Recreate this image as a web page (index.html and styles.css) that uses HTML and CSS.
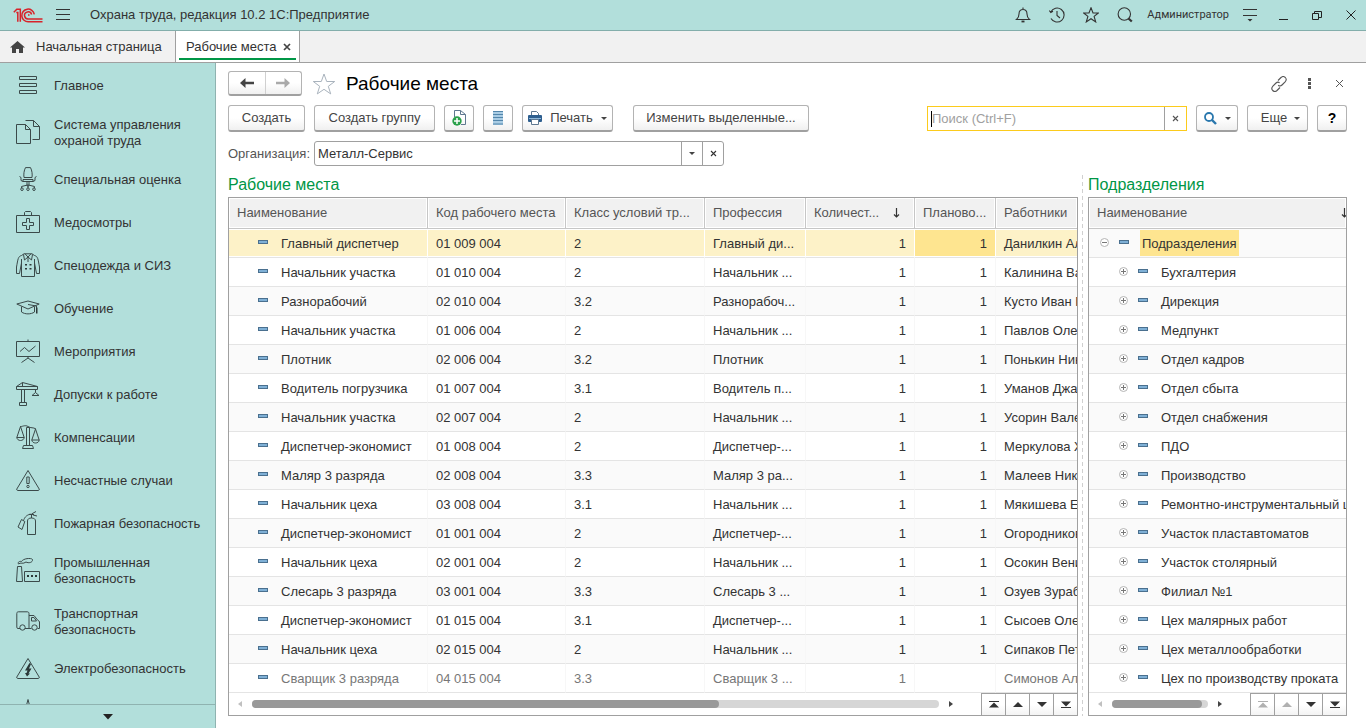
FILE: index.html
```html
<!DOCTYPE html>
<html lang="ru">
<head>
<meta charset="utf-8">
<title>Охрана труда, редакция 10.2</title>
<link rel="stylesheet" href="styles.css">
</head>
<body>
<svg class="defs" width="0" height="0" aria-hidden="true">
  <symbol id="x-small" viewBox="0 0 7 7"><path d="M1 1l5 5M6 1L1 6" stroke="currentColor" stroke-width="1.100" fill="none"/></symbol>
  <symbol id="go-top" viewBox="0 0 10 7"><path d="M0 0h10v1H0zM5 1.500l5 5H0z" fill="currentColor"/></symbol>
  <symbol id="go-up" viewBox="0 0 10 7"><path d="M5 1l5 5H0z" fill="currentColor"/></symbol>
  <symbol id="go-down" viewBox="0 0 10 7"><path d="M5 6l5-5H0z" fill="currentColor"/></symbol>
  <symbol id="go-bottom" viewBox="0 0 10 7"><path d="M0 6h10v1H0zM5 5.500l5-5H0z" fill="currentColor"/></symbol>
  <symbol id="plus" viewBox="0 0 9 9"><circle cx="4.500" cy="4.500" r="4" fill="#fff" stroke="#b4b4b4"/><path d="M2 4.500h5M4.500 2v5" stroke="#777"/></symbol>
  <symbol id="minus" viewBox="0 0 9 9"><circle cx="4.500" cy="4.500" r="4" fill="#fff" stroke="#b4b4b4"/><path d="M2 4.500h5" stroke="#777"/></symbol>
  <symbol id="sort" viewBox="0 0 7 10"><path d="M3.500 0v9M1 6.500l2.500 2.500L6 6.500" fill="none" stroke="#333" stroke-width="1.200"/></symbol>
</svg>

<header class="titlebar">
  <svg class="logo" width="30" height="15" viewBox="0 0 30 15" fill="none" stroke="#d8232a" stroke-width="1.500"><path d="M.8 4.200L3.800 1.200H7.300V13.800M3.300 4.500H4.800V13.800"/><path d="M21.300 6.300A6.300 6.300 0 1 0 15.500 13.700H29.500"/><path d="M18.600 6.500A3.600 3.600 0 1 0 15.500 11H29.500"/><path d="M16.500 7h-1.500"/></svg>
  <button class="icon-btn menu-btn" aria-label="Меню"><svg width="14" height="12" viewBox="0 0 14 12" stroke="#333"><path d="M0 .5h14M0 5.500h14M0 10.500h14"/></svg></button>
  <h1 class="app-title">Охрана труда, редакция 10.2 1С:Предприятие</h1>
  <div class="title-tools">
    <button class="icon-btn" aria-label="Уведомления"><svg width="16" height="16" viewBox="0 0 16 16" fill="none" stroke="#333" stroke-width="1.100"><path d="M1.500 12.500h13c-1.800-1.500-2.500-3-2.500-5.500C12 4 10.500 2.500 8 2.500S4 4 4 7c0 2.500-.7 4-2.500 5.500zM8 .5v2"/><path d="M6.500 14.500h3" stroke-width="1.800"/></svg></button>
    <button class="icon-btn" aria-label="История"><svg width="16" height="16" viewBox="0 0 16 16" fill="none" stroke="#333" stroke-width="1.100"><path d="M1.800 5A7 7 0 1 1 2 11.500M.3 3.500L1.800 5.500 4 4.300M8 4v4.500l3 2.500"/></svg></button>
    <button class="icon-btn" aria-label="Избранное"><svg width="16" height="16" viewBox="0 0 16 16" fill="none" stroke="#333" stroke-width="1.100"><path d="M8 .8l2 5.200h5.300l-4.200 3.400 1.600 5.500L8 11.700l-4.700 3.200 1.600-5.500L.7 6H6z"/></svg></button>
    <button class="icon-btn" aria-label="Поиск"><svg width="16" height="16" viewBox="0 0 16 16" fill="none" stroke="#333"><circle cx="7.300" cy="7" r="6.200" stroke-width="1.100"/><path d="M11.500 11.500l3.300 3" stroke-width="2.200"/></svg></button>
    <a class="user" href="#">Администратор</a>
    <button class="icon-btn" aria-label="Настройки"><svg width="14" height="13" viewBox="0 0 14 13"><path d="M0 .5h14M0 6.500h14" stroke="#333"/><path d="M4.500 10h5L7 12.500z" fill="#333"/></svg></button>
    <button class="icon-btn win" aria-label="Свернуть"><svg width="9" height="10" viewBox="0 0 9 10"><path d="M0 9.500h9" stroke="#222"/></svg></button>
    <button class="icon-btn win" aria-label="Восстановить"><svg width="10" height="9" viewBox="0 0 10 9" fill="none" stroke="#222"><path d="M.5 2.500h6v6h-6zM2.500 2.500v-2h7v6h-3"/></svg></button>
    <button class="icon-btn win" aria-label="Закрыть"><svg width="10" height="10" viewBox="0 0 10 10"><path d="M.5.5l9 9M9.500.5l-9 9" stroke="#222"/></svg></button>
  </div>
</header>

<nav class="tabs">
  <a class="tab home" href="#"><svg width="15" height="12" viewBox="0 0 15 12"><path d="M7.500 0L15 6.500h-2V12H9V8H6v4H2V6.500H0z" fill="#444"/></svg>Начальная страница</a>
  <div class="tab active"><a href="#">Рабочие места</a><button class="tab-close" aria-label="Закрыть вкладку"><svg width="8" height="8" viewBox="0 0 8 8"><path d="M1 1l6 6M7 1L1 7" stroke="#444" stroke-width="1.700"/></svg></button></div>
</nav>

<div class="workspace">
<aside class="sidebar">
  <nav class="sections">
    <a href="#"><svg viewBox="0 0 24 24"><path d="M3.500 3.500h17v3h-17zM3.500 10.500h17v3h-17zM3.500 17.500h17v3h-17z"/></svg><span>Главное</span></a>
    <a href="#" class="tall"><svg viewBox="0 0 24 24"><path d="M.5 4.500h9l5 5v14H.5zM9.500 4.500v5h5M9.500.5h8l6 6v13h-7M17.500.5v6h6"/></svg><span>Система управления охраной труда</span></a>
    <a href="#"><svg viewBox="0 0 24 24"><path d="M9.500.6h5c1.500 3 2 6.500 1.500 9.900H8C7.500 7 8 3.500 9.500.6zM7 12.500h10v2H7zM3.500 9.500l1.500 1v3L7 14.500M20.500 9.500l-1.500 1v3L17 14.500M11 14.500V19h2v-4.500M5.500 21v-1.500l6-1.500h1l6 1.500V21M12 18v3"/><circle cx="6" cy="22.200" r="1.300"/><circle cx="12" cy="22.200" r="1.300"/><circle cx="18" cy="22.200" r="1.300"/></svg><span>Специальная оценка</span></a>
    <a href="#"><svg viewBox="0 0 24 24"><path d="M.5 5.500h23v17H.5zM8.500 5.500v-3l1-1h5l1 1v3M10.500 8.500h3v4h4v3h-4v4h-3v-4h-4v-3h4z"/></svg><span>Медосмотры</span></a>
    <a href="#"><svg viewBox="0 0 24 24"><path d="M8 .8h8M8 .8L5.500 2.500C2 3.500 2 6 .5 14v6.500h3L5.500 10v13.500h13V10l2 10.500h3V14C22 6 22 3.500 18.500 2.500L16 .8M5.500 10V6M18.500 10V6M7.500 1.500l1 5.500L12 4l3.500 3 1-5.500M9 .8L12 4l3-3.200M12 4v5"/><path class="dots" d="M9 11h2v1.500H9zM13.500 11h2v1.500h-2zM9 15h2v1.500H9zM13.500 15h2v1.500h-2z"/></svg><span>Спецодежда и СИЗ</span></a>
    <a href="#"><svg viewBox="0 0 24 24"><path d="M.8 8L12 5l11.200 3L12 13zM5.500 10.500v5.500c3.500 2.500 9.500 2.500 13 0v-5.500M12 8.500l8.500 1.500v7"/><path class="dots" d="M20 11.500h1.500v6H20z"/></svg><span>Обучение</span></a>
    <a href="#"><svg viewBox="0 0 24 24"><path d="M.5 2.500h23v15H.5zM12 .5v2M12 17.500v2M5.500 23.500L12 19l6.500 4.500M4 12.500l4.500-4 4.500 4 6.500-5.500"/></svg><span>Мероприятия</span></a>
    <a href="#"><svg viewBox="0 0 24 24"><path d="M.5 4.500h21v3H.5zM.5 4.500l6-4 15 4M6.500.5v4M5.500 7.500v13M8.500 7.500v13M3.500 20.500h7v3h-7zM19.500 7.500v3M16 13.500l3.500-3 3.500 3z"/></svg><span>Допуски к работе</span></a>
    <a href="#"><svg viewBox="0 0 24 24"><path d="M10.500 2.500v18h3v-18zM7.500 20.500h9l1 3h-11zM12 1.500C9-.5 6 2 4 1.500M12 1.500c3 2 5 .5 8 2.500M4.500 1.500L.8 12.500h7.400zM.8 12.500c.5 4 7 4 7.400 0M19.500 4l-3.700 11h7.400zM15.800 15c.5 4 7 4 7.400 0"/></svg><span>Компенсации</span></a>
    <a href="#"><svg viewBox="0 0 24 24"><path d="M12 2.500L23.200 21c.2.900 0 1.300-.7 1.500h-21c-.7-.2-.9-.6-.7-1.500zM10.800 9h2.400v6.500h-2.400z"/><circle cx="12" cy="18.500" r="1.200"/></svg><span>Несчастные случаи</span></a>
    <a href="#"><svg viewBox="0 0 24 24"><path d="M11.500 23.500V10c0-2 1.500-3 4-3s4 1 4 3v13.500zM15.500 7V3M13 3.500h5M15.500 3L20 .5M17 4l4 1M14.500 3C9.500 4.500 8.500 7 7.500 9.500M5.500 8.500l3.300 2L6 18.500l-4-2.500z"/></svg><span>Пожарная безопасность</span></a>
    <a href="#" class="tall"><svg viewBox="0 0 24 24"><path d="M.5 23.500l1-15h4l1 15zM8.500 13.500h15v10h-15zM2.500 6c-1-2 1-3 3-2.500C7 .5 15-.5 16.500 1.500c.5 3-4 4-6.500 2.500C7 6.500 4.500 4 2.500 6z"/><path class="dots" d="M11 17h2v2h-2zM15 17h2v2h-2zM19 17h2v2h-2z"/></svg><span>Промышленная безопасность</span></a>
    <a href="#" class="tall"><svg viewBox="0 0 24 24"><path d="M4 19.500H2c-.8 0-1.200-.5-1.200-1.300V4.500c0-1 .5-1.700 1.500-1.700h9c1 0 1.700.7 1.700 1.700v15H9M13 6.500h5l4 5 1.500 1v7h-2M15.500 8.500h2.500l2.500 3.500h-5zM13 19.500h2.500"/><circle cx="6.500" cy="18.500" r="2.700"/><circle cx="18.500" cy="18.500" r="2.700"/></svg><span>Транспортная безопасность</span></a>
    <a href="#"><svg viewBox="0 0 24 24"><path d="M12 2.500L23.200 21c.2.900 0 1.300-.7 1.500h-21c-.7-.2-.9-.6-.7-1.500z"/><path class="dots" d="M13.500 7L9 14.500h2.500L10.500 17H9l2 3.500 3-3h-1.500l3-5H13l2-4.500z"/></svg><span>Электробезопасность</span></a>
    <a href="#" aria-label="Следующий раздел"><svg viewBox="0 0 24 24"><path d="M12 .5L15 12H9z"/></svg></a>
  </nav>
  <button class="more-sections" aria-label="Прокрутить разделы"><svg width="10" height="6" viewBox="0 0 10 6"><path d="M0 0h10L5 5.500z" fill="#222"/></svg></button>
</aside>

<main class="form">
  <div class="form-head">
    <div class="nav-pair">
      <button aria-label="Назад"><svg width="14" height="10" viewBox="0 0 14 10"><path d="M5.500 0L0 5l5.500 5V6.200H14V3.800H5.500z" fill="#444"/></svg></button>
      <button aria-label="Вперед"><svg width="14" height="10" viewBox="0 0 14 10"><path d="M8.500 0L14 5l-5.500 5V6.200H0V3.800h8.500z" fill="#aaa"/></svg></button>
    </div>
    <button class="icon-btn fav" aria-label="В избранное"><svg width="24" height="22" viewBox="0 0 24 22" fill="none" stroke="#a9b3bd"><path d="M12 1l2.700 7.500h8l-6.400 4.800 2.400 7.600L12 16.300l-6.700 4.600 2.400-7.600L1.300 8.500h8z"/></svg></button>
    <h2>Рабочие места</h2>
    <div class="head-tools">
      <button class="icon-btn" aria-label="Ссылка"><svg width="16" height="16" viewBox="0 0 16 16" fill="none" stroke="#555" stroke-width="1.100"><path d="M7 4.500l3-3c1.500-1.300 3.300-1 4.300 0 1.200 1.300 1.100 3-.2 4.400L11 9c-1 1-2.700 1.100-3.800.2M9 11.500l-3 3c-1.500 1.300-3.300 1-4.300 0-1.200-1.300-1.100-3 .2-4.400L5 7c1-.9 2.500-1.100 3.600-.3"/></svg></button>
      <button class="icon-btn" aria-label="Действия"><svg width="3" height="11" viewBox="0 0 3 11" fill="#555"><path d="M0 0h3v3H0zM0 4h3v3H0zM0 8h3v3H0z"/></svg></button>
      <button class="icon-btn" aria-label="Закрыть"><svg width="9" height="9" viewBox="0 0 9 9"><path d="M1 1l7 7M8 1L1 8" stroke="#555"/></svg></button>
    </div>
  </div>

  <div class="toolbar">
    <button class="btn b-create">Создать</button>
    <button class="btn b-group">Создать группу</button>
    <button class="btn b-icon" aria-label="Скопировать"><svg width="14" height="16" viewBox="0 0 14 16"><path d="M2.500 7V.5h6l5 4v10H9M8.500.5v4h5" fill="none" stroke="#5f7890"/><circle cx="5" cy="11" r="4.700" fill="#2ba14b"/><path d="M5 8v6M2 11h6" stroke="#fff" stroke-width="1.500"/></svg></button>
    <button class="btn b-icon" aria-label="Список"><svg width="10" height="14" viewBox="0 0 10 14"><path d="M0 0h10v14H0z" fill="#a9cce4"/><path d="M0 .5h10M0 3.500h10M0 6.500h10M0 9.500h10M0 13h10" stroke="#5386ab"/></svg></button>
    <button class="btn b-print"><svg width="14" height="14" viewBox="0 0 14 14"><path d="M3.500 5V.5h5l2 2V5" fill="#fff" stroke="#5f7890"/><rect y="4" width="14" height="7" rx="1" fill="#2e5f8f"/><path d="M1 7.500h12" stroke="#8fb8da"/><path d="M3.500 8.500h7v5h-7z" fill="#fff" stroke="#5f7890"/></svg><span>Печать</span><i class="caret-down"></i></button>
    <button class="btn b-edit">Изменить выделенные...</button>
    <div class="search">
      <span class="text-cursor"></span><input type="text" placeholder="Поиск (Ctrl+F)" aria-label="Поиск"><button aria-label="Очистить поиск"><svg width="7" height="7"><use href="#x-small"/></svg></button>
    </div>
    <button class="btn b-find" aria-label="Найти"><svg width="13" height="13" viewBox="0 0 13 13" fill="none" stroke="#2977ad"><circle cx="5" cy="5" r="4" stroke-width="1.800"/><path d="M8 8l4 4" stroke-width="2.400"/></svg><i class="caret-down"></i></button>
    <button class="btn b-more"><span>Еще</span><i class="caret-down"></i></button>
    <button class="btn b-help" aria-label="Справка">?</button>
  </div>

  <div class="filter">
    <label for="org">Организация:</label>
    <div class="combo"><input id="org" type="text" value="Металл-Сервис"><button aria-label="Выбрать"><i class="caret-down"></i></button><button aria-label="Очистить"><svg width="7" height="7"><use href="#x-small"/></svg></button></div>
  </div>

  <div class="panes">
    <section class="pane places">
      <h3>Рабочие места</h3>
      <div class="grid">
        <div class="grid-view">
        <table>
          <colgroup><col class="c-name"><col class="c-code"><col class="c-class"><col class="c-prof"><col class="c-count"><col class="c-plan"><col></colgroup>
          <thead><tr><th>Наименование</th><th>Код рабочего места</th><th>Класс условий тр...</th><th>Профессия</th><th><span class="sorted">Количест...<svg width="7" height="10"><use href="#sort"/></svg></span></th><th>Планово...</th><th>Работники</th></tr></thead>
          <tbody id="places"></tbody>
        </table>
        </div>
        <div class="grid-foot">
          <div class="scroll"><i class="arr left off"></i><div class="track"><div class="thumb wide"></div></div><i class="arr right"></i></div>
          <div class="jump"><button aria-label="В начало"><svg width="10" height="7"><use href="#go-top"/></svg></button><button aria-label="Вверх"><svg width="10" height="7"><use href="#go-up"/></svg></button><button aria-label="Вниз"><svg width="10" height="7"><use href="#go-down"/></svg></button><button aria-label="В конец"><svg width="10" height="7"><use href="#go-bottom"/></svg></button></div>
        </div>
      </div>
    </section>
    <div class="splitter"></div>
    <section class="pane units">
      <h3>Подразделения</h3>
      <div class="grid">
        <div class="grid-view">
        <table>
          <thead><tr><th><span class="sorted edge">Наименование<svg width="7" height="10"><use href="#sort"/></svg></span></th></tr></thead>
          <tbody id="units"></tbody>
        </table>
        </div>
        <div class="grid-foot">
          <div class="scroll"><i class="arr left off"></i><div class="track"><div class="thumb full"></div></div><i class="arr right"></i></div>
          <div class="jump"><button disabled aria-label="В начало"><svg width="10" height="7"><use href="#go-top"/></svg></button><button disabled aria-label="Вверх"><svg width="10" height="7"><use href="#go-up"/></svg></button><button aria-label="Вниз"><svg width="10" height="7"><use href="#go-down"/></svg></button><button aria-label="В конец"><svg width="10" height="7"><use href="#go-bottom"/></svg></button></div>
        </div>
      </div>
    </section>
  </div>
</main>
</div>
<script src="app.js"></script>
</body>
</html>
```
FILE: styles.css
```css
* { box-sizing: border-box; }
body { margin: 0; height: 100vh; display: flex; flex-direction: column; overflow: hidden; background: #fff; color: #333; font: 13px/16px "Liberation Sans", Arial, sans-serif; }
button, input { font: inherit; color: inherit; margin: 0; }
button { padding: 0; border: 0; background: none; display: flex; align-items: center; justify-content: center; }
a { color: inherit; text-decoration: none; }
h1, h2, h3 { margin: 0; font-weight: normal; }
svg { display: block; flex: none; }
.defs { position: absolute; }

.titlebar { display: flex; align-items: center; height: 31px; flex: none; padding: 0 7px 0 13px; background: #b2dfdb; border-bottom: 1px solid #83aeab; }
.menu-btn { margin: 0 20px 0 13px; }
.app-title { font-size: 13px; }
.title-tools { margin-left: auto; display: flex; align-items: center; gap: 18px; }
.user { font: 11px/16px Roboto, sans-serif; margin: 0 -4px; }
.win { width: 16px; }

.tabs { display: flex; flex: none; height: 32px; background: #f1f1f1; border-bottom: 1px solid #a0a0a0; }
.tab { display: flex; align-items: center; }
.home { width: 175px; padding-left: 10px; gap: 11px; }
.active { background: #fff; border: solid #a0a0a0; border-width: 0 1px; padding: 0 8px 0 10px; gap: 7px; box-shadow: inset 3px 0 #fff, inset -3px 0 #fff, inset 0 -2px #fff, inset 0 -4px #009646; }

.workspace { flex: 1; min-height: 0; display: flex; }
.sidebar { width: 216px; flex: none; display: flex; flex-direction: column; background: #b2dfdb; border-right: 1px solid #8fb3b0; }
.sections { flex: 1; min-height: 0; overflow: hidden; padding-top: 1px; }
.sections a { display: flex; align-items: center; gap: 14px; height: 43px; padding: 0 10px 0 16px; }
.sections a.tall { height: 51px; }
.sections svg { width: 24px; height: 24px; margin-bottom: 2px; fill: none; stroke: #3b4a4a; stroke-width: 1; }
.sections .dots { fill: #2c3838; stroke: none; }
.more-sections { height: 24px; flex: none; border-top: 1px solid #8fb3b0; }

.form { flex: 1; min-width: 0; display: flex; flex-direction: column; padding: 8px 19px 12px 12px; }
.form-head { display: flex; align-items: center; height: 25px; }
.nav-pair { display: flex; width: 74px; height: 25px; border: 1px solid #b3b3b3; border-bottom: 2px solid #a0a0a0; border-radius: 3px; background: linear-gradient(#fff 50%, #f0f0f0); }
.nav-pair button { flex: 1; }
.nav-pair button + button { border-left: 1px solid #d0d0d0; }
.fav { margin: 0 10px; }
h2 { font-size: 19px; line-height: 24px; color: #000; }
.head-tools { margin-left: auto; display: flex; align-items: center; gap: 14px; }
.head-tools button { width: 16px; }

.toolbar { display: flex; gap: 9px; height: 27px; margin-top: 9px; align-items: stretch; }
.btn { height: 27px; border: 1px solid #b3b3b3; border-bottom: 2px solid #a0a0a0; border-radius: 3px; background: linear-gradient(#fff 50%, #f0f0f0); color: #444; }
.b-create { width: 77px; }
.b-group { width: 121px; }
.b-icon { width: 30px; }
.b-print { width: 91px; gap: 8px; }
.b-edit { width: 176px; margin-left: 11px; }
.b-find { width: 42px; gap: 8px; }
.b-more { width: 61px; gap: 7px; padding-left: 6px; }
.b-help { width: 30px; font-weight: bold; font-size: 14px; color: #000; }
.caret-down { border: solid transparent; border-width: 3px 3px 0; border-top-color: #444; width: 0; height: 0; }
.search { margin: 1px 0 0 auto; width: 260px; height: 25px; display: flex; align-items: center; border: 1px solid #fccb1c; background: #fff; }
.text-cursor { width: 1px; height: 16px; margin-left: 3px; background: #000; }
.search input { flex: 1; min-width: 0; border: 0; padding: 0; outline: 0; background: none; }
.search input::placeholder { color: #a0a0a0; opacity: 1; }
.search button { width: 22px; align-self: stretch; border-left: 1px solid #a0a0a0; color: #555; }

.filter { display: flex; align-items: center; margin-top: 9px; color: #555; }
.filter label { width: 86px; }
.combo { width: 410px; height: 25px; display: flex; border: 1px solid #a0a0a0; border-radius: 3px; color: #333; }
.combo input { flex: 1; min-width: 0; border: 0; padding: 0 3px; outline: 0; background: none; }
.combo button { width: 21px; border-left: 1px solid #a0a0a0; }

.panes { flex: 1; min-height: 0; display: flex; margin-top: 8px; }
.pane { display: flex; flex-direction: column; min-width: 0; }
.places { flex: 1; }
.units { width: 259px; }
.splitter { width: 10px; margin-top: 1px; background: repeating-linear-gradient(#d0d0d0 0 4px, #fff 4px 7px) 4px 0 / 1px 100% no-repeat; }
h3 { font-size: 16px; line-height: 22px; height: 23px; color: #009646; }
.grid { flex: 1; min-height: 0; display: flex; flex-direction: column; border: 1px solid #a0a0a0; }
.grid-view { flex: 1; min-height: 0; overflow: hidden; }
table { width: 100%; table-layout: fixed; border-collapse: separate; border-spacing: 0; }
.c-name { width: 199px; } .c-code { width: 138px; } .c-class { width: 139px; } .c-prof { width: 101px; } .c-count { width: 109px; } .c-plan { width: 81px; }
th { height: 31px; padding: 0 0 0 8px; text-align: left; font-weight: normal; color: #555; white-space: nowrap; overflow: hidden; background: #f1f1f1; border-right: 1px solid #c6c6c6; border-bottom: 1px solid #c6c6c6; box-shadow: inset 0 0 0 1px #fff; }
th:last-child, #places td:last-child, #units td { border-right: 0; }
.sorted { display: flex; align-items: center; justify-content: space-between; padding-right: 14px; }
.sorted.edge { padding-right: 0; margin-right: -2px; }
td { height: 29px; padding: 2px 0 0 8px; white-space: nowrap; overflow: hidden; border-bottom: 1px solid #e4e4e4; border-right: 1px solid #f7f7f7; }
td:first-child { padding-top: 0; }
tbody tr:nth-child(odd) td { background: #fafafa; }
tbody tr:nth-child(even) td { background: #fff; }
td.num { text-align: right; padding-right: 8px; }
#places .sel td { background: #fdf2c8; box-shadow: inset 0 1px #fff, inset 0 -1px #fff; border-right-color: #fff; }
#places .sel td.cur { background: #fee590; }
tr.dim td { color: #777; }
.cell { display: flex; align-items: center; }
.cell span { padding: 6px 2px 4px; }
.mark { width: 10px; height: 4px; flex: none; border: 1px solid #4a708f; background: #7fb0d6; }
.places .mark { margin: 0 11px 2px 21px; }
.units .cell { padding-left: 22px; }
.units .sel .cell { padding-left: 3px; }
.units .cell svg { margin-bottom: 2px; }
.units .mark { margin: 0 11px 2px 10px; }
.units .sel .cell span { background: #fee590; }

.grid-foot { display: flex; height: 22px; flex: none; }
.scroll { flex: 1; display: flex; align-items: center; padding: 0 28px 0 9px; }
.track { flex: 1; height: 8px; margin: 0 10px; border-radius: 4px; background: #d6d6d6; }
.thumb { height: 8px; border-radius: 4px; background: #999; }
.wide { width: 68%; }
.full { width: 94%; }
.arr { border: solid transparent; border-width: 3px 4px; width: 0; height: 0; }
.arr.left { border-left: 0; border-right-color: #444; }
.arr.right { border-right: 0; border-left-color: #444; }
.arr.off { border-right-color: #c0c0c0; }
.jump { display: flex; border-top: 1px solid #a0a0a0; background: linear-gradient(#fff 50%, #f3f3f3); }
.jump button { width: 24px; border-left: 1px solid #a0a0a0; color: #333; }
.jump button:disabled { color: #b0b0b0; }
```
FILE: app.js
```js
const places = [
  ["Главный диспетчер", "01 009 004", "2", "Главный ди...", "Данилкин Александр"],
  ["Начальник участка", "01 010 004", "2", "Начальник ...", "Калинина Валентина"],
  ["Разнорабочий", "02 010 004", "3.2", "Разнорабоч...", "Кусто Иван Петрович"],
  ["Начальник участка", "01 006 004", "2", "Начальник ...", "Павлов Олег"],
  ["Плотник", "02 006 004", "3.2", "Плотник", "Понькин Никита"],
  ["Водитель погрузчика", "01 007 004", "3.1", "Водитель п...", "Уманов Джамал"],
  ["Начальник участка", "02 007 004", "2", "Начальник ...", "Усорин Валерий"],
  ["Диспетчер-экономист", "01 008 004", "2", "Диспетчер-...", "Меркулова Жанна"],
  ["Маляр 3 разряда", "02 008 004", "3.3", "Маляр 3 ра...", "Малеев Николай"],
  ["Начальник цеха", "03 008 004", "3.1", "Начальник ...", "Мякишева Елена"],
  ["Диспетчер-экономист", "01 001 004", "2", "Диспетчер-...", "Огородников Иван"],
  ["Начальник цеха", "02 001 004", "2", "Начальник ...", "Осокин Вениамин"],
  ["Слесарь 3 разряда", "03 001 004", "3.3", "Слесарь 3 ...", "Озуев Зураб"],
  ["Диспетчер-экономист", "01 015 004", "3.1", "Диспетчер-...", "Сысоев Олег"],
  ["Начальник цеха", "02 015 004", "2", "Начальник ...", "Сипаков Петр"],
  ["Сварщик 3 разряда", "04 015 004", "3.3", "Сварщик 3 ...", "Симонов Алексей"]
];
const units = ["Подразделения", "Бухгалтерия", "Дирекция", "Медпункт", "Отдел кадров", "Отдел сбыта", "Отдел снабжения", "ПДО", "Производство", "Ремонтно-инструментальный цех", "Участок пластавтоматов", "Участок столярный", "Филиал №1", "Цех малярных работ", "Цех металлообработки", "Цех по производству проката"];

document.getElementById("places").innerHTML = places.map((p, i) => {
  const last = i === places.length - 1;
  return `<tr class="${i === 0 ? "sel" : last ? "dim" : ""}"><td><div class="cell"><i class="mark"></i><span>${p[0]}</span></div></td><td>${p[1]}</td><td>${p[2]}</td><td>${p[3]}</td><td class="num">1</td><td class="num cur">${last ? "" : "1"}</td><td>${p[4]}</td></tr>`;
}).join("");

document.getElementById("units").innerHTML = units.map((u, i) =>
  `<tr class="${i === 0 ? "sel" : ""}"><td><div class="cell"><svg width="9" height="9"><use href="#${i === 0 ? "minus" : "plus"}"/></svg><i class="mark"></i><span>${u}</span></div></td></tr>`
).join("");
```
